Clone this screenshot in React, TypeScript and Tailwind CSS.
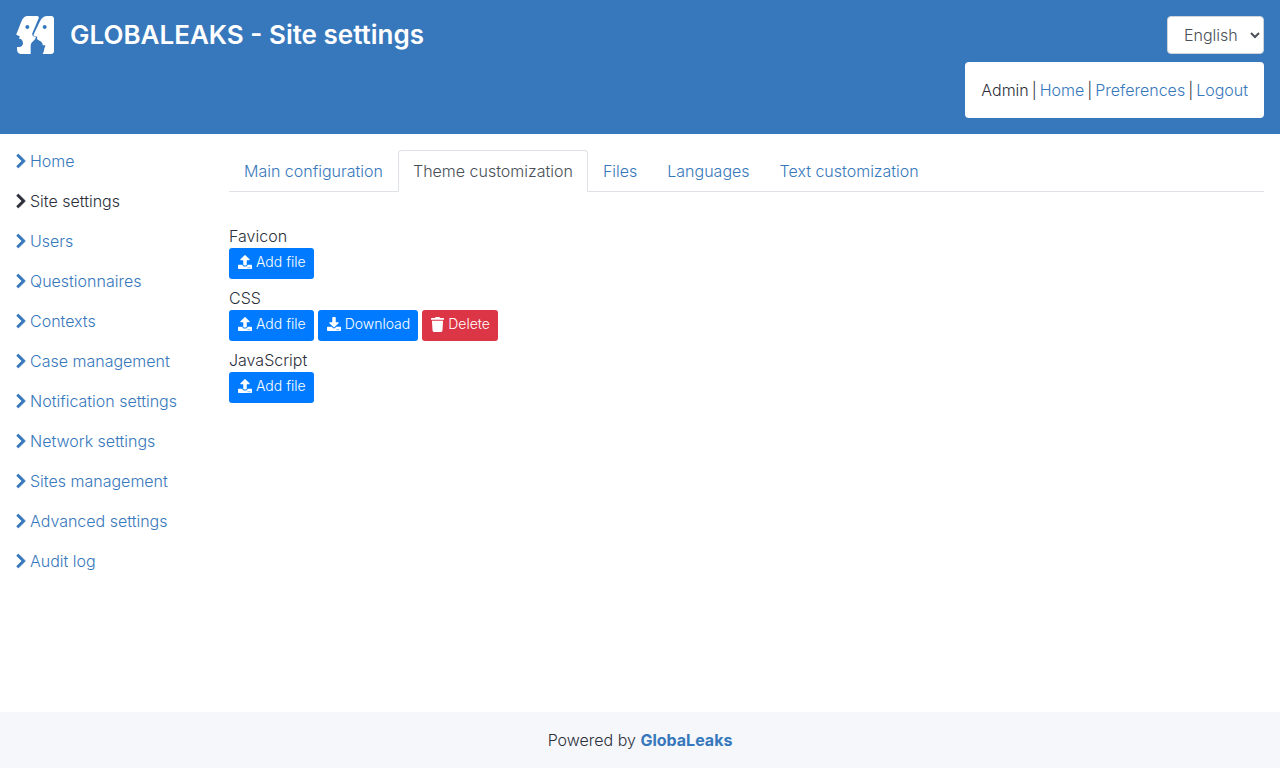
import { useState } from "react";
import type { ReactNode } from "react";
import { FaChevronRight, FaDownload, FaTrash, FaUpload } from "react-icons/fa";

const menu = [
  "Home",
  "Site settings",
  "Users",
  "Questionnaires",
  "Contexts",
  "Case management",
  "Notification settings",
  "Network settings",
  "Sites management",
  "Advanced settings",
  "Audit log",
];

const tabs = ["Main configuration", "Theme customization", "Files", "Languages", "Text customization"];

function Logo() {
  return (
    <svg viewBox="0 0 114 114" className="size-[38px]" aria-hidden="true">
      <path
        fill="#fff"
        d="M32 0H63Q70 1 68 7L49 52Q47 58 52 61L60 62Q59 70 52 75Q45 79 44 88V114H14Q3 112 3 99V93H12Q19 92 21 84Q22 74 15 69H10L11 61L1 56Q0 54 3 50L14 22Q20 2 32 0Z"
      />
      <path
        fill="#fff"
        d="M92 0H106Q114 1 114 9V106Q113 114 105 114H80Q85 106 85 97Q88 93 88 88H80V84Q78 76 68 73L63 69L64 62L53 59Q52 57 54 53L71 18Q78 1 92 0Z"
      />
      <circle cx="34" cy="33" r="6" fill="#3778bc" />
      <circle cx="86" cy="33" r="6" fill="#3778bc" />
    </svg>
  );
}

function ActionButton({ icon, label, danger = false }: { icon: ReactNode; label: string; danger?: boolean }) {
  return (
    <button
      type="button"
      className={`flex h-[31px] items-start gap-1 rounded-[3px] pt-1 pr-2 pl-[9px] text-sm leading-5 text-white ${
        danger ? "bg-[#dc3545]" : "bg-[#007bff]"
      }`}
    >
      <span className="pt-[3px]">{icon}</span>
      {label}
    </button>
  );
}

function FileSection({ title, children }: { title: string; children: ReactNode }) {
  return (
    <section>
      <h2 className="leading-6">{title}</h2>
      <div className="flex gap-1">{children}</div>
    </section>
  );
}

export default function App() {
  const [active, setActive] = useState("Theme customization");
  return (
    <div className="flex min-h-screen flex-col bg-white font-['Metropolis','Inter',sans-serif] text-base leading-6 font-light text-[#2c2f3a]">
      <header className="flex items-start justify-between bg-[#3778bc] p-4">
        <div className="flex items-center gap-4">
          <Logo />
          <h1 className="text-[26px] leading-9 font-semibold text-white">GLOBALEAKS - Site settings</h1>
        </div>
        <div className="flex flex-col items-end gap-2">
          <select
            aria-label="Language"
            defaultValue="English"
            className="h-[38px] w-[97px] rounded-[4px] border border-[#ced4da] bg-white pr-0 pl-3 text-[#495057]"
          >
            <option>English</option>
          </select>
          <div className="flex gap-[3px] rounded-[4px] bg-white p-4">
            <span>Admin</span>|
            <a href="#home" className="text-[#3778bc]">Home</a>|
            <a href="#preferences" className="text-[#3778bc]">Preferences</a>|
            <a href="#logout" className="text-[#3778bc]">Logout</a>
          </div>
        </div>
      </header>

      <div className="flex flex-1">
        <nav className="w-[213px] shrink-0 py-[7px] pl-4">
          {menu.map((item) => (
            <a
              key={item}
              href="#"
              className={`flex h-10 items-center gap-1 ${item === "Site settings" ? "text-[#2c2f3a]" : "text-[#3778bc]"}`}
            >
              <FaChevronRight strokeWidth={24} className="h-4 w-[10px]" />
              {item}
            </a>
          ))}
        </nav>
        <main className="flex-1 p-4">
          <div role="tablist" className="flex border-b border-[#dee2e6]">
            {tabs.map((tab) => (
              <button
                key={tab}
                type="button"
                role="tab"
                aria-selected={tab === active}
                onClick={() => setActive(tab)}
                className={`-mb-px h-[42px] rounded-t-[4px] border px-[14px] ${
                  tab === active
                    ? "border-[#dee2e6] border-b-white bg-white text-[#495057]"
                    : "border-transparent text-[#3778bc]"
                }`}
              >
                {tab}
              </button>
            ))}
          </div>
          <div className="flex flex-col gap-[7px] pt-8">
            <FileSection title="Favicon">
              <ActionButton icon={<FaUpload />} label="Add file" />
            </FileSection>
            <FileSection title="CSS">
              <ActionButton icon={<FaUpload />} label="Add file" />
              <ActionButton icon={<FaDownload />} label="Download" />
              <ActionButton icon={<FaTrash className="h-[15px] w-[13px]" />} label="Delete" danger />
            </FileSection>
            <FileSection title="JavaScript">
              <ActionButton icon={<FaUpload />} label="Add file" />
            </FileSection>
          </div>
        </main>
      </div>

      <footer className="bg-[#f5f7fb] p-4 text-center">
        Powered by <a href="#globaleaks" className="font-bold text-[#3778bc]">GlobaLeaks</a>
      </footer>
    </div>
  );
}
